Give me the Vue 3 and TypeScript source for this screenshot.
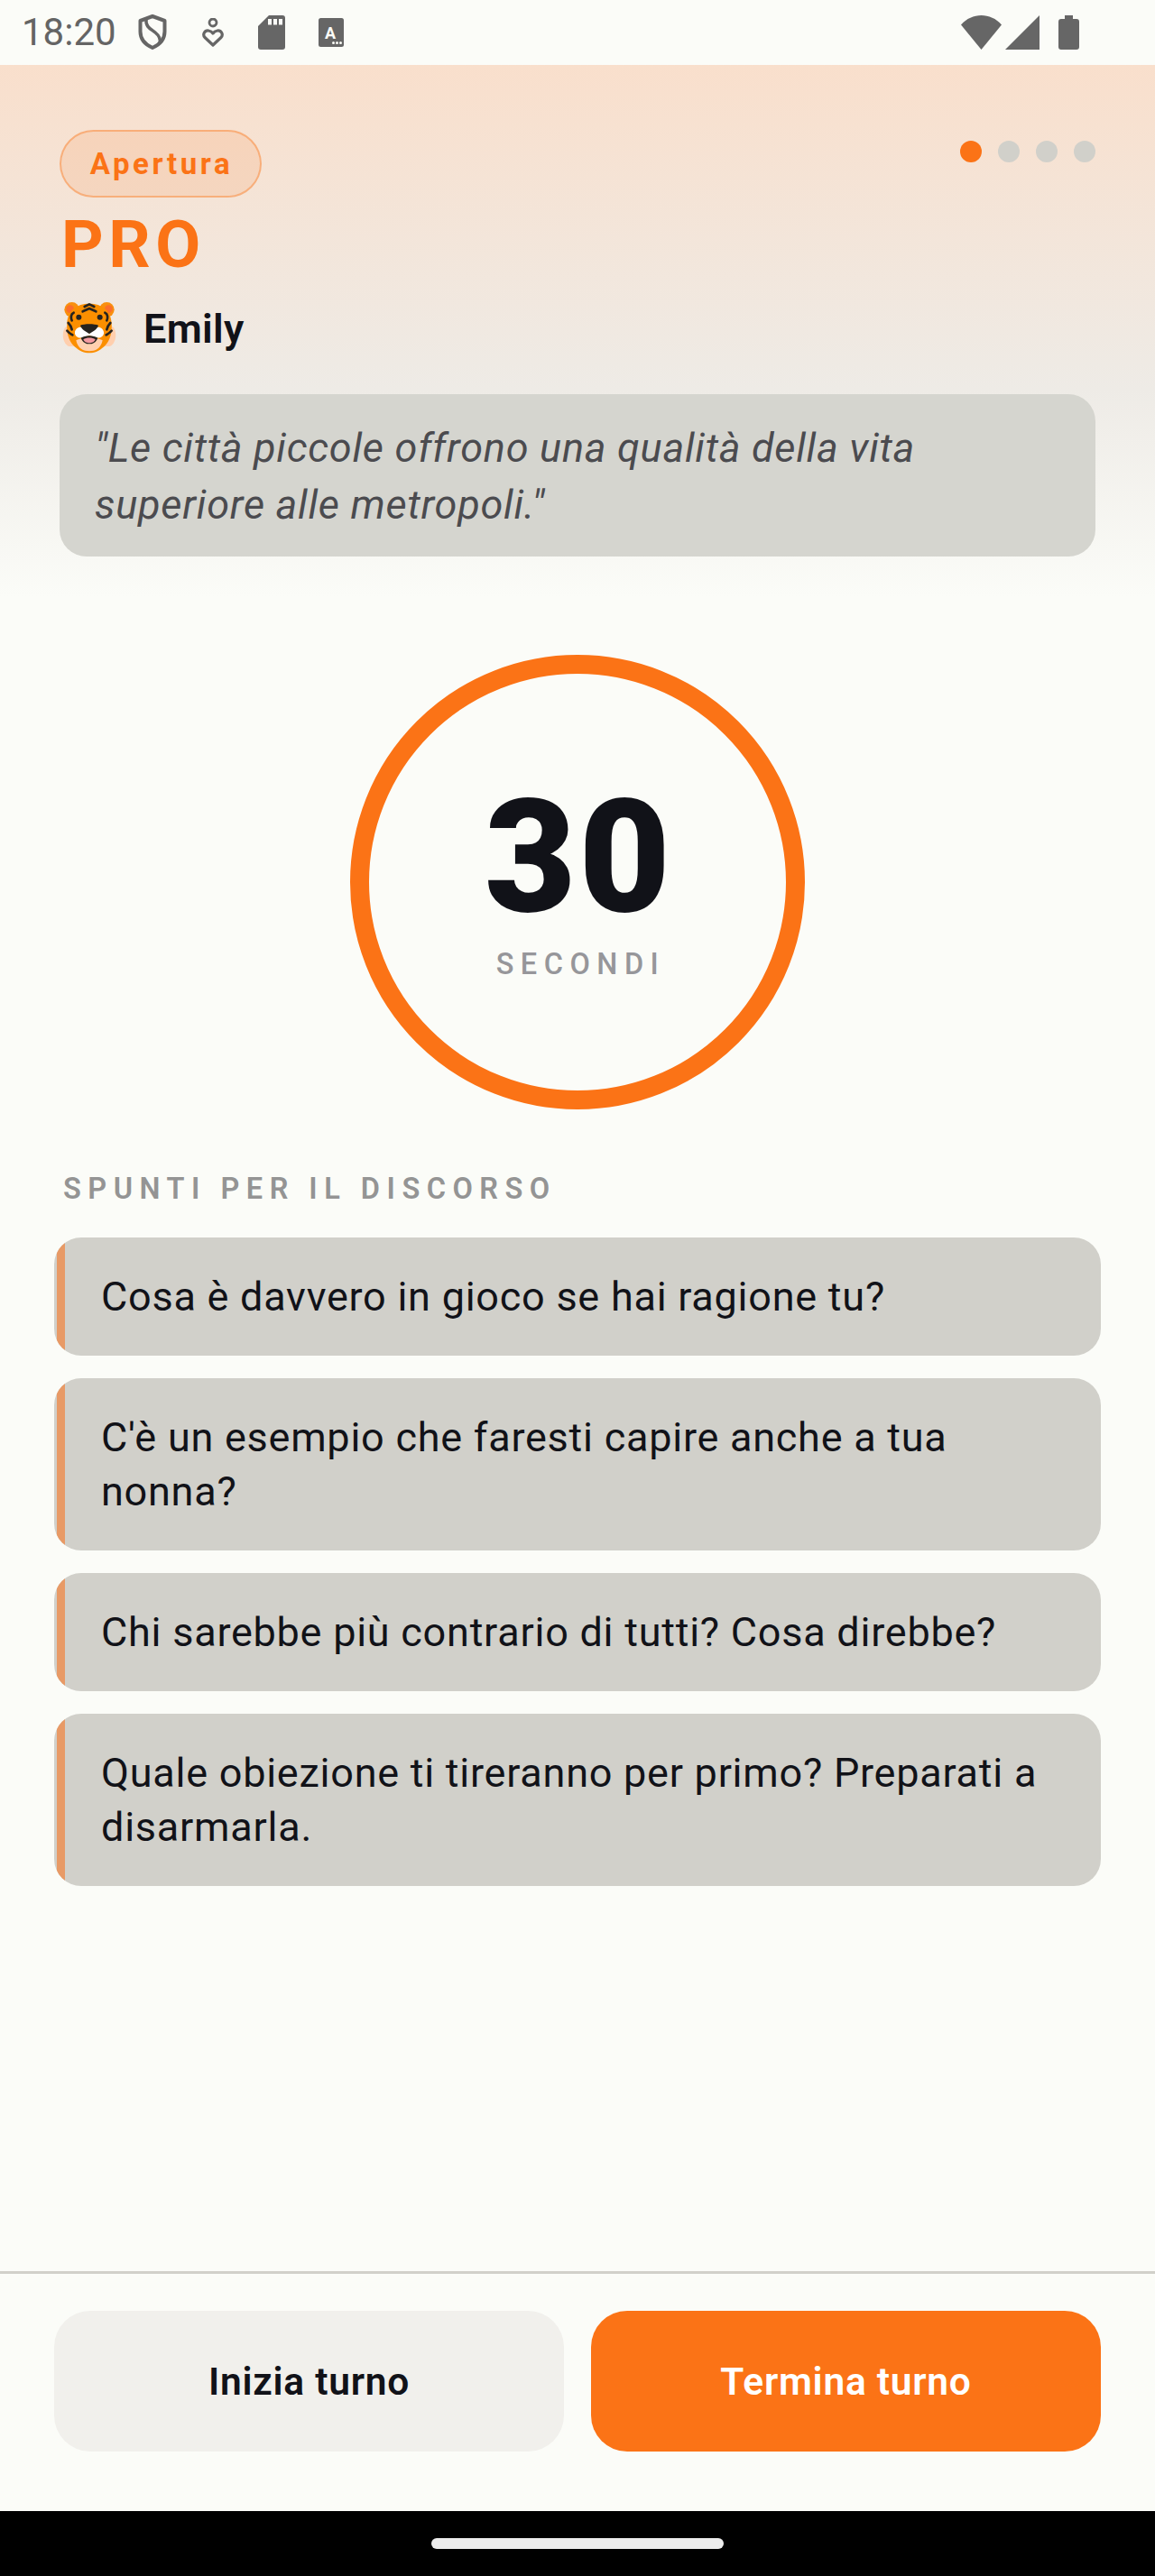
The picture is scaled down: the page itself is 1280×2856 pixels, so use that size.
<script setup lang="ts">
const prompts: string[] = [
  'Cosa è davvero in gioco se hai ragione tu?',
  "C'è un esempio che faresti capire anche a tua nonna?",
  'Chi sarebbe più contrario di tutti? Cosa direbbe?',
  'Quale obiezione ti tireranno per primo? Preparati a disarmarla.',
]
const dots = [true, false, false, false]
</script>

<template>
  <div class="screen">
    <div class="statusbar">
      <span class="time">18:20</span>
      <svg class="ic-shield" width="32" height="39" viewBox="0 0 32 39">
        <path d="M16 2 L29.500 7 V19 C29.500 27 24 33.500 16 37 C8 33.500 2.500 27 2.500 19 V7 Z" fill="none" stroke="#666" stroke-width="4" stroke-linejoin="round" />
        <path d="M9 5 C8 14 14 16 19 20 C24 24 25 28 24 32" fill="none" stroke="#666" stroke-width="3.500" />
      </svg>
      <svg class="ic-loc" width="24" height="32" viewBox="0 0 24 32">
        <circle cx="12" cy="5" r="4" fill="none" stroke="#666" stroke-width="2.800" />
        <path d="M12 30 L3 21.500 C0 18 3 13.500 7 14 C9 14.300 11 15.500 12 17 C13 15.500 15 14.300 17 14 C21 13.500 24 18 21 21.500 Z" fill="none" stroke="#666" stroke-width="3.200" stroke-linejoin="round" />
      </svg>
      <svg class="ic-sd" width="30" height="38" viewBox="0 0 30 38">
        <path d="M12 0 H27 Q30 0 30 3 V35 Q30 38 27 38 H3 Q0 38 0 35 V12 Z" fill="#666" />
        <path d="M11 4 h4 v6.500 h-4 Z M17 4 h4 v6.500 h-4 Z M23 4 h4 v6.500 h-4 Z" fill="#fbfcf8" />
      </svg>
      <svg class="ic-a" width="28" height="32" viewBox="0 0 28 32">
        <rect width="28" height="32" rx="2.500" fill="#666" />
        <text x="13" y="23" font-family="Roboto, sans-serif" font-weight="700" font-size="18" fill="#fbfcf8" text-anchor="middle">A</text>
        <circle cx="16.500" cy="27.500" r="1.500" fill="#fbfcf8" />
        <circle cx="20.500" cy="27.500" r="1.500" fill="#fbfcf8" />
        <circle cx="24.500" cy="27.500" r="1.500" fill="#fbfcf8" />
      </svg>
      <div class="status-right">
        <svg width="45" height="38" viewBox="0 0 45 38">
          <path d="M0 10.500 C12 -3.500 33 -3.500 45 10.500 L22.500 38 Z" fill="#666" />
        </svg>
        <svg class="ic-cell" width="38" height="38" viewBox="0 0 38 38">
          <path d="M38 0 V38 H0 Z" fill="#666" />
        </svg>
        <svg class="ic-batt" width="23" height="38" viewBox="0 0 23 38">
          <path d="M7 0 H16 V4 H20 Q23 4 23 7 V35 Q23 38 20 38 H3 Q0 38 0 35 V7 Q0 4 3 4 H7 Z" fill="#666" />
        </svg>
      </div>
    </div>

    <header class="head">
      <div class="head-top">
        <div class="pill">Apertura</div>
        <div class="dots">
          <span v-for="(on, i) in dots" :key="i" class="dot" :class="{ on }"></span>
        </div>
      </div>
      <div class="side">PRO</div>
      <div class="speaker">
        <!-- tiger face -->
        <svg class="tiger" width="60" height="60" viewBox="18 20 180 180">
          <path d="M30 105 C14 120 18 160 40 170 L176 170 C198 160 202 120 186 105 Z" fill="#ffcfae" />
          <circle cx="50" cy="48" r="25" fill="#f98f0e" />
          <circle cx="166" cy="48" r="25" fill="#f98f0e" />
          <circle cx="44" cy="46" r="13" fill="#fb6e2b" />
          <circle cx="172" cy="46" r="13" fill="#fb6e2b" />
          <path d="M108 28 C150 28 180 50 182 92 C184 125 178 150 158 170 C140 186 125 192 108 192 C91 192 76 186 58 170 C38 150 32 125 34 92 C36 50 66 28 108 28 Z" fill="#fb8f00" />
          <path d="M64 150 C80 140 136 140 152 150 C146 178 128 186 108 186 C88 186 70 178 64 150 Z" fill="#ffd0b0" />
          <path d="M60 122 C64 104 84 102 96 112 L108 128 L120 112 C132 102 152 104 156 122 C158 134 146 146 130 140 L108 134 L86 140 C70 146 58 134 60 122 Z" fill="#fff" />
          <path d="M78 100 C90 94 126 94 138 100 C136 112 118 122 108 128 C98 122 80 112 78 100 Z" fill="#26231f" />
          <path d="M80 142 C92 132 124 132 136 142 C130 158 118 162 108 162 C98 162 86 158 80 142 Z" fill="#26231f" />
          <path d="M88 147 C98 140 118 140 128 147 C124 157 116 159 108 159 C100 159 92 157 88 147 Z" fill="#f49aa0" />
          <circle cx="73" cy="73" r="9" fill="#26231f" />
          <circle cx="143" cy="73" r="9" fill="#26231f" />
          <g fill="none" stroke="#26231f" stroke-width="8" stroke-linecap="round" stroke-linejoin="round">
            <path d="M92 38 L108 30 L124 38" />
            <path d="M86 54 L108 44 L130 54" />
            <path d="M56 58 C46 62 46 76 50 84" />
            <path d="M160 58 C170 62 170 76 166 84" />
            <path d="M38 92 C44 98 48 106 50 114" />
            <path d="M178 92 C172 98 168 106 166 114" />
            <path d="M34 118 C40 124 46 130 52 132" />
            <path d="M182 118 C176 124 170 130 164 132" />
          </g>
        </svg>
        <span class="name">Emily</span>
      </div>
      <div class="quote">"Le città piccole offrono una qualità della vita superiore alle metropoli."</div>
    </header>

    <div class="timer-wrap">
      <div class="timer">
        <div class="count">30</div>
        <div class="unit">SECONDI</div>
      </div>
    </div>

    <section class="prompts">
      <div class="label">SPUNTI PER IL DISCORSO</div>
      <div v-for="p in prompts" :key="p" class="prompt">{{ p }}</div>
    </section>

    <footer class="foot">
      <button class="btn light">Inizia turno</button>
      <button class="btn primary">Termina turno</button>
    </footer>

    <div class="navbar"><span class="home"></span></div>
  </div>
</template>

<style>
html, body {
  margin: 0;
  padding: 0;
  background: #fbfcf8;
}
</style>

<style scoped>
.screen {
  width: 1280px;
  height: 2856px;
  display: flex;
  flex-direction: column;
  background: #fbfcf8;
  color: #111218;
  font-family: Roboto, "Noto Sans", sans-serif;
  overflow: hidden;
}

/* status bar */
.statusbar {
  height: 72px;
  flex: none;
  display: flex;
  align-items: center;
  padding-left: 24px;
  padding-right: 84px;
  box-sizing: border-box;
}
.time {
  font-size: 42px;
  color: #646464;
  line-height: 72px;
  width: 104px;
}
.ic-shield { margin-left: 25px; margin-top: -1px; }
.ic-loc { margin-left: 39px; }
.ic-sd { margin-left: 38px; margin-top: -1px; }
.ic-a { margin-left: 37px; }
.status-right {
  margin-left: auto;
  display: flex;
  align-items: center;
}
.ic-cell { margin-left: 4px; }
.ic-batt { margin-left: 21px; }

/* header */
.head {
  flex: none;
  height: 590px;
  box-sizing: border-box;
  padding: 72px 66px 0;
  background: linear-gradient(180deg, #f9dfcc 0%, #eeebe6 61%, #fbfcf8 100%);
}
.head-top {
  display: flex;
  justify-content: space-between;
  align-items: flex-start;
}
.pill {
  height: 75px;
  width: 224px;
  box-sizing: border-box;
  border: 2.5px solid rgba(249, 115, 22, 0.4);
  border-radius: 38px;
  background: rgba(249, 115, 22, 0.12);
  color: #fb7316;
  font-size: 33px;
  font-weight: 700;
  letter-spacing: 3.6px;
  padding-left: 2px;
  display: flex;
  align-items: center;
  justify-content: center;
}
.dots {
  display: flex;
  gap: 18px;
  margin-top: 12px;
}
.dot {
  width: 24px;
  height: 24px;
  border-radius: 50%;
  background: #d1d0ca;
}
.dot.on { background: #fb7316; }
.side {
  margin: 9px 0 0 2px;
  font-size: 72.5px;
  line-height: 88px;
  font-weight: 700;
  letter-spacing: 5.5px;
  color: #fb7316;
}
.speaker {
  display: flex;
  align-items: center;
  gap: 30px;
  margin: 18px 0 0 3px;
  height: 60px;
}
.name {
  font-size: 45px;
  font-weight: 600;
  letter-spacing: 0.3px;
}
.quote {
  margin-top: 43px;
  box-sizing: border-box;
  height: 180px;
  padding: 28px 39px;
  border-radius: 30px;
  background: #d5d5cf;
  color: #4b4b4f;
  font-size: 45px;
  font-style: italic;
  line-height: 63px;
  letter-spacing: 0.75px;
}

/* timer */
.timer-wrap {
  flex: none;
  display: flex;
  justify-content: center;
  padding-top: 64px;
}
.timer {
  width: 504px;
  height: 504px;
  box-sizing: border-box;
  border: 21px solid #fb7316;
  border-radius: 50%;
  display: flex;
  flex-direction: column;
  align-items: center;
  justify-content: center;
}
.count {
  font-size: 175px;
  font-weight: 900;
  letter-spacing: 3px;
  line-height: 176px;
  margin-top: -6px;
  padding-left: 3px;
}
.unit {
  font-size: 32.5px;
  font-weight: 500;
  letter-spacing: 7.5px;
  color: #96969a;
  margin-top: 11px;
  margin-right: -7px;
}

/* prompts */
.prompts {
  flex: none;
  padding: 68px 60px 0;
  display: flex;
  flex-direction: column;
  gap: 25px;
}
.label {
  margin-left: 10px;
  font-size: 32.5px;
  font-weight: 600;
  letter-spacing: 7.5px;
  color: #949494;
  line-height: 40px;
  margin-bottom: 9px;
}
.prompt {
  position: relative;
  overflow: hidden;
  border-radius: 30px;
  background: #d1d0ca;
  padding: 35.5px 40px 35.5px 52px;
  font-size: 45px;
  line-height: 60px;
  letter-spacing: 0.75px;
}
.prompt::before {
  content: "";
  position: absolute;
  left: 3px;
  top: 0;
  bottom: 0;
  width: 9px;
  background: #e89a66;
}

/* footer */
.foot {
  margin-top: auto;
  flex: none;
  height: 266px;
  box-sizing: border-box;
  border-top: 3px solid #d1d0ca;
  padding: 41px 60px 0;
  display: flex;
  gap: 30px;
}
.btn {
  flex: 1;
  height: 156px;
  border: none;
  border-radius: 40px;
  font-family: inherit;
  font-size: 42.5px;
  font-weight: 600;
  letter-spacing: 0.75px;
}
.light {
  background: #f1f0ec;
  color: #111218;
}
.primary {
  background: #fb7316;
  color: #fff;
}

.navbar {
  flex: none;
  height: 72px;
  background: #000;
  display: flex;
  justify-content: center;
  align-items: center;
}
.home {
  width: 324px;
  height: 12px;
  border-radius: 6px;
  background: #ececec;
}
</style>
